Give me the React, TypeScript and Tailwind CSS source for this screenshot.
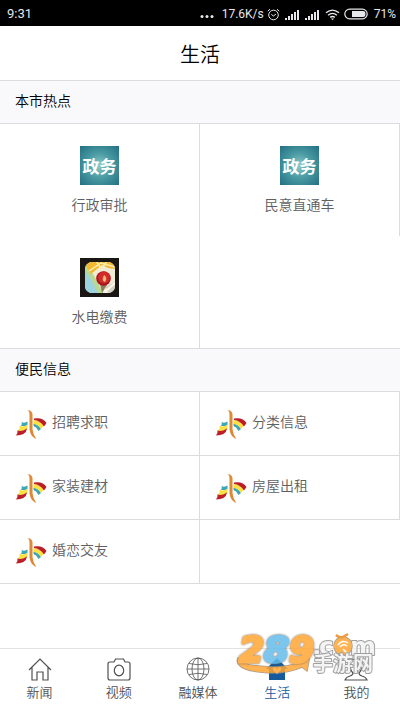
import clsx from "clsx"
import React, { useId, useState } from "react"

const hotItems = [
  { label: "行政审批", icon: "gov" },
  { label: "民意直通车", icon: "gov" },
  { label: "水电缴费", icon: "map" },
]

const infoItems = ["招聘求职", "分类信息", "家装建材", "房屋出租", "婚恋交友"]

const SignalIcon = () => (
  <svg className="mr-[5px] h-[11px] w-[15px]" viewBox="0 0 15 11" fill="#e5e7eb">
    <path d="M0 9h2v2H0zM3 7h2v4H3zM6 5h2v6H6zM9 3h2v8H9zM12 1h2v10h-2z" />
  </svg>
)

const StatusBar = () => {
  return (
    <div className="flex h-[26px] items-center justify-between bg-black pt-[2px] pr-1 pl-[7px] font-['Roboto',sans-serif] text-[13px] leading-4 text-gray-200">
      <span>9:31</span>
      <div className="flex items-center">
        <svg className="mr-2 h-3 w-[14px]" viewBox="0 0 14 12" fill="#e5e7eb">
          <circle cx="2" cy="8.5" r="1.5" />
          <circle cx="7" cy="8.5" r="1.5" />
          <circle cx="12" cy="8.5" r="1.5" />
        </svg>
        <span className="mr-[3px] text-xs">17.6K/s</span>
        <svg className="mr-[5px] h-[13px] w-[13px]" viewBox="0 0 13 13" fill="none" stroke="#e5e7eb">
          <circle cx="6.5" cy="7" r="4.8" />
          <path d="M4.3 6.2l2 1.8 2.6-1.8M.8 3.2L3 1.2M12.2 3.2L10 1.2" />
        </svg>
        <SignalIcon />
        <SignalIcon />
        <svg className="mr-1 h-[13px] w-[15px]" viewBox="0 0 15 13" fill="none" stroke="#e5e7eb" strokeWidth="1.4">
          <path d="M1 4.8q6.5-5.4 13 0M3.1 7.2q4.4-3.6 8.8 0M5.2 9.4q2.3-1.9 4.6 0" />
          <path d="M6 10.6h3l-1.5 1.6z" fill="#e5e7eb" stroke="none" />
        </svg>
        <svg className="mr-[6px] h-3 w-6" viewBox="0 0 24 12">
          <rect x=".8" y="1.2" width="22.4" height="9.6" rx="4.8" fill="none" stroke="#e5e7eb" strokeWidth="1.2" />
          <path d="M8 3h11q2.5 0 2.5 3T19 9H8z" fill="#e5e7eb" />
        </svg>
        <span className="text-xs">71%</span>
      </div>
    </div>
  )
}

const GovIcon = () => (
  <span className="flex h-[39px] w-[39px] items-center justify-center bg-[radial-gradient(circle,#8ecbc8_0%,#4a9ba3_45%,#226f83_100%)] text-[17px] leading-none font-bold text-white">
    政务
  </span>
)

const MapIcon = () => {
  const clipId = useId()
  return (
    <svg className="h-[39px] w-[39px]" viewBox="0 0 39 39">
      <defs>
        <clipPath id={clipId}>
          <rect x="5" y="4" width="30" height="31" rx="7" />
        </clipPath>
      </defs>
      <rect width="39" height="39" fill="#191614" />
      <g clipPath={`url(#${clipId})`}>
        <path fill="#f0ecd6" d="M0 0h39v39H0z" />
        <path fill="#9cd3de" d="M4 9l9 13 7 15H4z" />
        <path fill="#b9d894" d="M4 7l3-1 9 15 8 16h-5l-7-14L4 11z" />
        <path fill="#f2b832" d="M10 3h26v8l-8-1-6-3-11 9-5-8z" />
        <path d="M9 13L21 5l14 4M16 3l6 9M27 3l-4 6" stroke="#fff0aa" strokeWidth="1.5" fill="none" />
        <path fill="#d3d0c2" d="M26 29l10-6v13H28z" />
        <path d="M19 24l9 13M25 34l11-10" stroke="#faf8e9" strokeWidth="2" />
      </g>
      <path d="M20 26l2 9 5-8z" fill="#8c7d5d" />
      <circle cx="23.5" cy="20.5" r="7.3" fill="#a9161d" />
      <circle cx="24" cy="19.5" r="6" fill="#d32a2c" />
      <path d="M24 17q4 3 1 7-4-1-1-7z" fill="#f3c072" />
    </svg>
  )
}

const CityLogo = () => (
  <svg className="h-8 w-8 shrink-0" viewBox="0 0 32 32">
    <path fill="#3fa5b5" d="M6.5 14q3 1.5 6-.5V17q-3 2-7 .5 2-1 1-3.5z" />
    <path fill="#3fa5b5" d="M18.5 15.500q5 1 7.500 5.500l-2.500 2q-2-4-5-5z" />
    <path fill="#fae245" d="M4.500 17.500q4 2 8-.5v4q-4 3.500-10 2 2.500-2 2-5.500z" />
    <path fill="#fae245" d="M18.500 12q7 .5 10.500 5.500l-3 3.500q-3-5-7.500-5z" />
    <path fill="#bd1f28" d="M2.500 22.500q5 1.500 9.500-2-1 7-11 7 2-2.500 1.500-5z" />
    <path fill="#bd1f28" d="M19 10.500q9-1.500 12.500 4.500L29 18.500q-4-6-10-6.500z" />
    <path fill="#dc8a35" d="M12.500 2q5.500 0 5 6.500v12q.5 6 4 10.500-6-2-7-9.500V7q0-4-2-5z" />
  </svg>
)

const SectionTitle = ({ children }: { children: React.ReactNode }) => (
  <h2 className="border-y border-[#dcdcde] bg-[#f9f9fc] pt-[9px] pb-[13px] pl-[15px] text-sm leading-5 font-[350] text-black">
    {children}
  </h2>
)

const HomeIcon = () => (
  <svg className="h-6 w-6" viewBox="0 0 24 24" fill="none" stroke="currentColor" strokeWidth="1.2">
    <path d="M1 13L12 2l11 11M4 10v13h5v-8h6v8h5V10" />
  </svg>
)

const CameraIcon = () => (
  <svg className="h-6 w-6" viewBox="0 0 24 24" fill="none" stroke="currentColor" strokeWidth="1.2">
    <path d="M3 5h4l1.500-3h8L18 5h3q2 0 2 2v14q0 2-2 2H3q-2 0-2-2V7q0-2 2-2z" />
    <ellipse cx="12" cy="13.5" rx="4.7" ry="5.3" />
  </svg>
)

const GlobeIcon = () => (
  <svg className="h-6 w-6" viewBox="0 0 24 24" fill="none" stroke="currentColor" strokeWidth=".8">
    <circle cx="12" cy="12" r="11" />
    <ellipse cx="12" cy="12" rx="6" ry="11" />
    <path d="M12 1v22M1 12h22M3 6.500q9 2.500 18 0M3 17.500q9-2.500 18 0" />
  </svg>
)

const LifeIcon = () => (
  <svg className="h-6 w-6" viewBox="0 0 24 24">
    <path fill="currentColor" d="M12 1l11 11h-3v11H4V12H1z" />
    <path fill="#fff" d="M12 17l-4-4q-1-2 1-3 2 0 3 2 1-2 3-2 2 1 1 3z" />
  </svg>
)

const UserIcon = () => (
  <svg className="h-6 w-6" viewBox="0 0 24 24" fill="none" stroke="currentColor" strokeWidth="1.2">
    <path d="M9 16q-3-3-3-8 0-6 6-6t6 6q0 5-3 8 0 2 3 3 4 1 5 4H1q1-3 5-4 3-1 3-3z" />
  </svg>
)

const tabs = [
  { label: "新闻", Icon: HomeIcon },
  { label: "视频", Icon: CameraIcon },
  { label: "融媒体", Icon: GlobeIcon },
  { label: "生活", Icon: LifeIcon },
  { label: "我的", Icon: UserIcon },
]

const Watermark = () => (
  <svg
    className="pointer-events-none absolute right-[22px] bottom-[36px] h-[42px] w-[144px] overflow-visible opacity-85"
    viewBox="0 0 144 42"
    strokeLinejoin="round"
    paintOrder="stroke">
    <path
      d="M4 25q2 5 12 7 30 5 48-2l-4-3 16-6-3 17-5-4q-13 6-31 6Q-1 38 4 25z"
      fill="#ffa634"
      stroke="#9b8b78"
      strokeWidth="1.5"
    />
    <g className="font-['DejaVu_Sans',sans-serif] font-bold italic" fontSize="36" strokeWidth="3">
      <text className="drop-shadow-[0_0_1px_#6b5a48]" x="5" y="29" fill="#ffa634" stroke="#ffa634">
        2
      </text>
      <text className="drop-shadow-[0_0_1px_#6b5a48]" x="55" y="29" fill="#ffa634" stroke="#ffa634">
        9
      </text>
      <text className="drop-shadow-[0_0_1px_#6b5a48]" x="30" y="29" fill="#66bdec" stroke="#66bdec">
        8
      </text>
    </g>
    <g
      className="font-['DejaVu_Sans',sans-serif] font-bold"
      fontSize="25"
      stroke="#8f8f8f"
      strokeWidth="2"
      fill="#f3f3f3">
      <text x="78" y="22">.</text>
      <text x="85" y="22">c</text>
      <text x="116" y="22">m</text>
    </g>
    <circle cx="109" cy="13" r="9" fill="#ffa634" stroke="#9b8b78" strokeWidth="1.5" />
    <path d="M102 2q3 3 7 2l5-3" stroke="#e98920" strokeWidth="2.5" fill="none" />
    <path d="M104 12q4-6 10-2M106 14q3-4 7-1M109 16l5 5" stroke="#fff" strokeWidth="1.5" fill="none" />
    <text
      className="font-['Noto_Sans_CJK_SC',sans-serif] font-bold"
      x="79"
      y="38"
      fontSize="20"
      stroke="#8f8f8f"
      strokeWidth="2"
      fill="#f3f3f3">
      手游网
    </text>
  </svg>
)

const App = () => {
  const [activeTab, setActiveTab] = useState("生活")

  return (
    <div className="flex min-h-screen flex-col bg-white font-['Noto_Sans_CJK_SC',sans-serif] text-[#606060]">
      <StatusBar />
      <header className="flex h-[54px] items-center justify-center pt-[2px]">
        <h1 className="text-xl leading-7 font-[350] text-black">生活</h1>
      </header>

      <main className="flex-1">
        <section>
          <SectionTitle>本市热点</SectionTitle>
          <div className="grid grid-cols-2">
            {hotItems.map(item => (
              <a
                key={item.label}
                href="#"
                className="flex h-28 flex-col items-center border-r border-[#dcdcde] pt-[22px]">
                {item.icon === "gov" ? <GovIcon /> : <MapIcon />}
                <span className="mt-[9px] text-sm leading-5 font-[350]">{item.label}</span>
              </a>
            ))}
          </div>
        </section>

        <section>
          <SectionTitle>便民信息</SectionTitle>
          <div className="grid grid-cols-2">
            {infoItems.map(label => (
              <a
                key={label}
                href="#"
                className="flex h-16 items-center border-r border-b border-[#dcdcde] pl-[15px]">
                <CityLogo />
                <span className="ml-[5px] pb-[6px] text-sm leading-5 font-[350]">{label}</span>
              </a>
            ))}
            <div className="border-b border-[#dcdcde]" />
          </div>
        </section>
      </main>

      <nav className="relative border-t border-[#e2e2e2]">
        <div className="grid h-[62px] grid-cols-5 pr-1">
          {tabs.map(({ label, Icon }) => (
            <button
              key={label}
              type="button"
              onClick={() => setActiveTab(label)}
              className={clsx(
                "flex flex-col items-center pt-2 text-[13px] leading-5 font-[350]",
                label === activeTab ? "text-[#145a9c]" : "text-[#505050]"
              )}>
              <Icon />
              <span className="mt-px">{label}</span>
            </button>
          ))}
        </div>
        <Watermark />
      </nav>
    </div>
  )
}

export default App
